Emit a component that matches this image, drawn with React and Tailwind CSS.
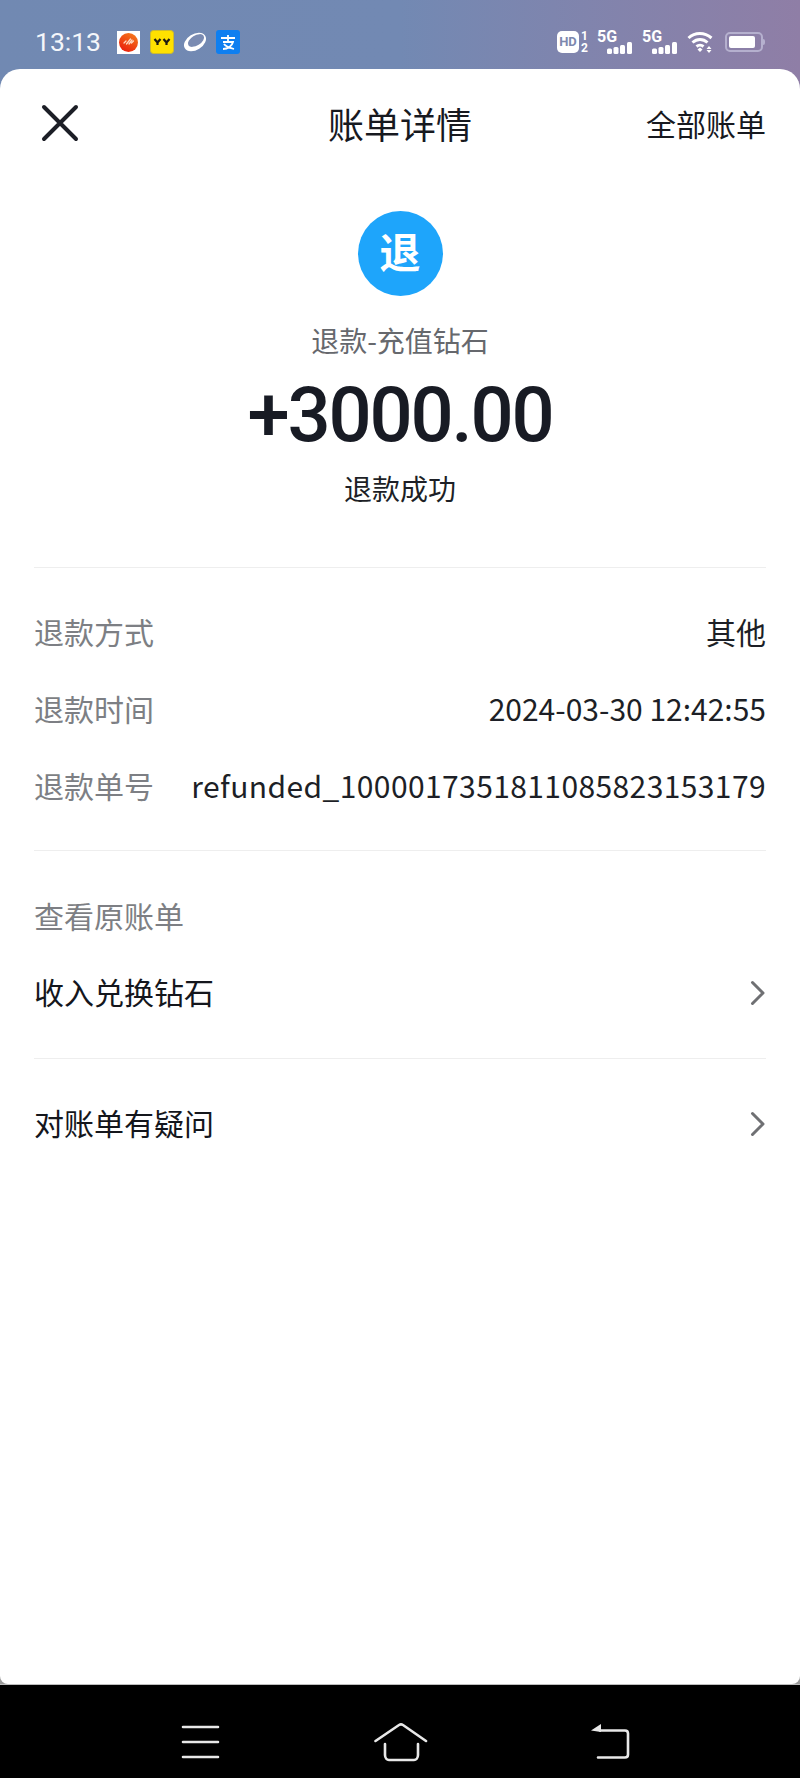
import React from 'react';

function SmallIcons() {
    return (
        <div className="flex items-center">
            <svg width="23" height="23" viewBox="0 0 23 23" className="ml-[16px]">
                <defs>
                    <linearGradient id="music" x1="0.8" y1="0" x2="0.2" y2="1">
                        <stop offset="0" stopColor="#f57a1c" />
                        <stop offset="1" stopColor="#ea1c0c" />
                    </linearGradient>
                </defs>
                <rect width="23" height="23" fill="#fff" />
                <circle cx="11.5" cy="11.5" r="9.5" fill="url(#music)" />
                <path d="M7 12l2-2M9.500 13l4-5M12 13l3-4M14.500 12l2-2" fill="none" stroke="#ffd9c2" strokeWidth="1.300" strokeLinecap="round" />
            </svg>
            <svg width="24" height="24" viewBox="0 0 24 24" className="ml-[10px]">
                <rect x="0.500" y="0.500" width="23" height="23" rx="3" fill="#ffe100" stroke="#cdbb2e" />
                <path d="M4.500 9l3 3.500L10.500 9M7.500 12.500V15M13.500 9l3 3.500L19.500 9M16.500 12.500V15" fill="none" stroke="#1d1a10" strokeWidth="2.200" />
            </svg>
            <svg width="24" height="22" viewBox="0 0 24 22" className="ml-[9px]">
                <ellipse cx="12" cy="11" rx="12" ry="8" transform="rotate(-32 12 11)" fill="#fff" />
                <ellipse cx="13" cy="9.500" rx="9" ry="5" transform="rotate(-32 13 9.500)" fill="#7a8bb2" />
            </svg>
            <svg width="24" height="24" viewBox="0 0 24 24" className="ml-[9px]">
                <rect width="24" height="24" rx="3" fill="#0f7ff0" />
                <path d="M5 8h14M12 5v6M7 12h10c-1 4-5 7-10 7M8 14c2 3 6 4 10 5" fill="none" stroke="#fff" strokeWidth="1.800" />
            </svg>
        </div>
    );
}

function Signal() {
    return (
        <div className="flex flex-col w-[36px] h-[23px] text-white">
            <span className="text-[16px] leading-[12px] h-[11px] font-bold font-['Roboto',sans-serif]">5G</span>
            <svg width="36" height="12" viewBox="0 0 36 12">
                <rect x="10" y="6.500" width="5" height="5.500" rx="1.500" fill="#fff" />
                <rect x="16.500" y="5" width="5" height="7" rx="1.500" fill="#fff" />
                <rect x="23" y="3" width="5" height="9" rx="1.500" fill="#fff" />
                <rect x="30" y="0" width="5" height="12" rx="1.500" fill="#fff" />
            </svg>
        </div>
    );
}

function StatusBar() {
    return (
        <div className="h-[93px] shrink-0 flex items-start justify-between pt-[30px] pl-[35px] pr-[35px] bg-gradient-to-r from-[#7189b2] via-[#7289b3] to-[#8f7ea6]">
            <div className="flex items-center h-[24px]">
                <span className="text-[26.5px] leading-[24px] text-[#f4f6fa] font-['Roboto',sans-serif]">13:13</span>
                <SmallIcons />
            </div>
            <div className="flex items-center h-[24px]">
                <div className="flex items-center">
                    <span className="w-[22px] h-[22px] rounded-[5px] bg-white text-[#7d88ae] text-[13px] leading-[22px] text-center font-bold font-['Roboto',sans-serif]">HD</span>
                    <div className="flex flex-col items-center text-white text-[12px] leading-[12px] font-bold font-['Roboto',sans-serif] ml-[1px] w-[9px]">
                        <span>1</span>
                        <span>2</span>
                    </div>
                </div>
                <div className="ml-[8px]"><Signal /></div>
                <div className="ml-[9px]"><Signal /></div>
                <svg width="27" height="22" viewBox="0 0 27 22" className="ml-[9px]">
                    <path d="M1.500 7c6.500-6 16-6 23 0M5.500 11.500c4.500-4 10.500-4 15 0M9.500 15.500c2-1.700 5-1.700 7 0" fill="none" stroke="#fff" strokeWidth="3" />
                    <path d="M10.500 18.500l2.500-2 2.500 2-2.500 2.500z" fill="#fff" />
                    <path d="M22 15l2.500 3h-5zM22 22l2.500-3h-5z" fill="#fff" />
                </svg>
                <div className="flex items-center ml-[11px]">
                    <div className="w-[38px] h-[20px] rounded-[5px] border-2 border-[#b5b0ce] p-[2px]">
                        <div className="w-[85%] h-full rounded-[2px] bg-white" />
                    </div>
                    <div className="w-[2px] h-[6px] bg-[#b5b0ce] rounded-r" />
                </div>
            </div>
        </div>
    );
}

function InfoRow({ label, value, valueClass }) {
    return (
        <div className="flex items-center justify-between h-[77px] text-[30px]">
            <span className="text-[#7d7f84] whitespace-nowrap">{label}</span>
            <span className={valueClass}>{value}</span>
        </div>
    );
}

function LinkRow({ label }) {
    return (
        <div className="flex items-center justify-between text-[30px] leading-[44px] text-[#14161c]">
            <span className="-mt-[2px]">{label}</span>
            <svg width="16" height="26" viewBox="0 0 16 26" className="mt-[1px]">
                <path d="M2.500 2.500L13 13 2.500 23.500" fill="none" stroke="#6f7073" strokeWidth="3" strokeLinecap="round" strokeLinejoin="round" />
            </svg>
        </div>
    );
}

function NavBar() {
    return (
        <div className="h-[93px] shrink-0 bg-black flex items-start pt-[37px] pl-[181px]">
            <svg width="40" height="34" viewBox="0 0 40 34" className="mt-[3px]">
                <path d="M2 2h35M2 17h35M2 32h35" stroke="#e8e8e8" strokeWidth="2.600" strokeLinecap="round" />
            </svg>
            <svg width="54" height="40" viewBox="0 0 54 40" className="ml-[153px]">
                <path d="M1.500 19L25 3c1.300-.8 2.700-.8 4 0L52 19" fill="none" stroke="#e8e8e8" strokeWidth="2.600" strokeLinecap="round" />
                <path d="M11 22v11c0 3 2 5 4 5h25c2 0 4-2 4-5V22" fill="none" stroke="#e8e8e8" strokeWidth="2.600" strokeLinecap="round" />
            </svg>
            <svg width="40" height="38" viewBox="0 0 40 38" className="ml-[162px]">
                <path d="M1 8.500L11 2v8z" fill="#e8e8e8" />
                <path d="M10 8.500h25c2 0 3 1 3 3v21c0 2-1 3-3 3H8" fill="none" stroke="#e8e8e8" strokeWidth="2.600" strokeLinecap="round" />
            </svg>
        </div>
    );
}

export default function App() {
    return (
        <div className="w-[800px] h-[1778px] flex flex-col bg-[#9a9a9a] overflow-hidden font-['Noto_Sans_CJK_SC','Noto_Sans',sans-serif]">
            <StatusBar />
            <div className="flex-1 -mt-[24px] bg-white rounded-t-[20px] rounded-b-[8px] px-[34px] relative">
                {/* header */}
                <div className="grid grid-cols-[1fr_auto_1fr] items-center h-[108px]">
                    <svg width="38" height="38" viewBox="0 0 38 38" className="ml-[7px]">
                        <path d="M3 3l32 32M35 3L3 35" stroke="#1c1e26" strokeWidth="4" strokeLinecap="round" />
                    </svg>
                    <span className="text-[36px] text-[#17191f]">账单详情</span>
                    <span className="text-[30px] text-[#17191f] text-right">全部账单</span>
                </div>

                {/* refund summary */}
                <div className="flex flex-col items-center pt-[34px]">
                    <div className="w-[85px] h-[85px] rounded-full bg-[#1ea5fb] flex items-center justify-center text-white text-[41px] font-bold pb-[5px]">退</div>
                    <div className="mt-[24px] text-[28px] leading-[40px] text-[#66686d]">退款-充值钻石</div>
                    <div className="mt-[13px] text-[76px] leading-[84px] font-medium tracking-[-2.200px] text-[#181b24] font-['Roboto',sans-serif]">+3000.00</div>
                    <div className="mt-[11px] text-[28px] leading-[40px] text-[#1d1f26]">退款成功</div>
                </div>

                <div className="h-px bg-[#eeeeee] mt-[59px]" />

                <div className="pt-[25px] pb-[26px]">
                    <InfoRow label="退款方式" value="其他" valueClass="text-[#1d1f26] whitespace-nowrap" />
                    <InfoRow label="退款时间" value="2024-03-30 12:42:55" valueClass="text-[#1d1f26] whitespace-nowrap" />
                    <InfoRow label="退款单号" value="refunded_1000017351811085823153179" valueClass="text-[#1d1f26] whitespace-nowrap tracking-[0.400px]" />
                </div>

                <div className="h-px bg-[#eeeeee]" />

                <div className="mt-[42px] text-[30px] leading-[44px] text-[#7d7f84]">查看原账单</div>
                <div className="mt-[34px]"><LinkRow label="收入兑换钻石" /></div>
                <div className="h-px bg-[#eeeeee] mt-[45px]" />
                <div className="mt-[43px]"><LinkRow label="对账单有疑问" /></div>
            </div>
            <div className="h-px shrink-0 bg-[#bdbdbd]" />
            <NavBar />
        </div>
    );
}
